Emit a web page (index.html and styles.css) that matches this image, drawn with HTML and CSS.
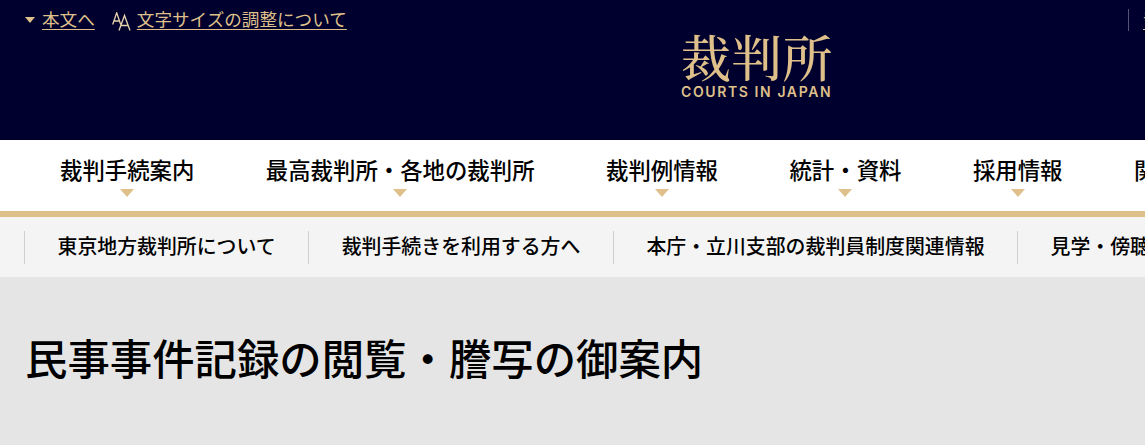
FILE: index.html
```html
<!DOCTYPE html>
<html lang="ja">
<head>
  <title>民事事件記録の閲覧・謄写の御案内</title>
  <link rel="stylesheet" href="styles.css">
</head>
<body>
  <div class="page">
    <header class="site-header">
      <div class="util-left">
        <a class="skip-link" href="#main">本文へ</a>
        <svg class="size-icon" width="19" height="20" viewBox="0 0 19 20" fill="none" stroke="#e6d3ae" stroke-width="1.3">
          <path d="M0.7 12.5 L4.7 0.8 L8.7 12.5 M2 9 H7.4"/>
          <path d="M7 18.5 L12.5 3.5 L18 18.5 M8.7 13.5 H16.3"/>
        </svg>
        <a class="util-link" href="#">文字サイズの調整について</a>
      </div>
      <div class="logo">
        <div class="logo-ja">裁判所</div>
        <div class="logo-en">COURTS IN JAPAN</div>
      </div>
      <div class="util-right">
        <a class="util-link" href="#">音声読み上げ</a>
      </div>
    </header>

    <nav class="main-nav">
      <a class="nav-item" href="#">裁判手続案内</a>
      <a class="nav-item" href="#">最高裁判所・各地の裁判所</a>
      <a class="nav-item" href="#">裁判例情報</a>
      <a class="nav-item" href="#">統計・資料</a>
      <a class="nav-item" href="#">採用情報</a>
      <a class="nav-item" href="#">関連情報</a>
    </nav>

    <nav class="sub-nav">
      <a class="sub-item" href="#">東京地方裁判所について</a>
      <a class="sub-item" href="#">裁判手続きを利用する方へ</a>
      <a class="sub-item" href="#">本庁・立川支部の裁判員制度関連情報</a>
      <a class="sub-item" href="#">見学・傍聴案内</a>
    </nav>

    <main id="main" class="content">
      <h1 class="page-title">民事事件記録の閲覧・謄写の御案内</h1>
    </main>
  </div>
</body>
</html>
```

FILE: styles.css
```css
html, body {
    margin: 0;
    padding: 0;
    height: 100%;
    overflow: hidden;
}

body {
    font-family: "Liberation Sans", "Noto Sans CJK JP", sans-serif;
    color: #000;
    background-color: #e5e5e5;
}

a {
    color: inherit;
    text-decoration: none;
}

.page {
    width: 1512px;
}

/* header */
.site-header {
    display: grid;
    grid-template-columns: 1fr auto 1fr;
    height: 140px;
    background-color: #00002e;
    color: #dfc08a;
}

.util-left {
    display: flex;
    align-items: flex-start;
    padding: 9px 0 0 25px;
    font-size: 17.6px;
    line-height: 22px;
}

.skip-link {
    position: relative;
    margin-left: 17px;
    text-decoration: underline;
    text-underline-offset: 3px;
}

.skip-link::before {
    content: "";
    position: absolute;
    left: -17px;
    top: 8px;
    border-left: 5.5px solid transparent;
    border-right: 5.5px solid transparent;
    border-top: 6px solid #dfc08a;
}

.util-link {
    text-decoration: underline;
    text-underline-offset: 3px;
}

.size-icon {
    margin: 3px 6px 0 17px;
}

.logo {
    padding-top: 25px;
    width: 150px;
}

.logo-ja {
    font-family: "Noto Serif CJK JP", "Noto Sans CJK JP", sans-serif;
    font-size: 50px;
    font-weight: 500;
    line-height: 60px;
    letter-spacing: 0.8px;
    white-space: nowrap;
}

.logo-en {
    font-family: "Inter", sans-serif;
    font-size: 14px;
    font-weight: 600;
    line-height: 14px;
    letter-spacing: 1.6px;
    white-space: nowrap;
}

.util-right {
    display: flex;
    align-items: flex-start;
    margin: 9px 0 0 297px;
    padding-left: 14px;
    height: 22px;
    border-left: 1px solid #55557a;
    font-size: 17.6px;
    line-height: 22px;
    white-space: nowrap;
}

/* main navigation */
.main-nav {
    display: flex;
    gap: 71.5px;
    height: 71px;
    padding-left: 60px;
    background-color: #fff;
    border-bottom: 6px solid #dfc08a;
}

.nav-item {
    position: relative;
    padding-top: 17px;
    font-size: 22.4px;
    font-weight: 500;
    line-height: 30px;
    white-space: nowrap;
}

.nav-item::after {
    content: "";
    position: absolute;
    left: 50%;
    top: 49px;
    margin-left: -7px;
    border-left: 7px solid transparent;
    border-right: 7px solid transparent;
    border-top: 8px solid #dfc08a;
}

/* sub navigation */
.sub-nav {
    display: flex;
    align-items: center;
    height: 60px;
    padding-left: 24px;
    background-color: #f4f4f4;
}

.sub-item {
    padding: 0 32.5px;
    border-left: 1px solid #d0d0d0;
    font-size: 19.9px;
    font-weight: 500;
    line-height: 33px;
    white-space: nowrap;
}

/* content */
.content {
    padding: 54px 25px 0;
}

.page-title {
    margin: 0;
    font-size: 42.4px;
    font-weight: 500;
    line-height: 60px;
    white-space: nowrap;
}
```
